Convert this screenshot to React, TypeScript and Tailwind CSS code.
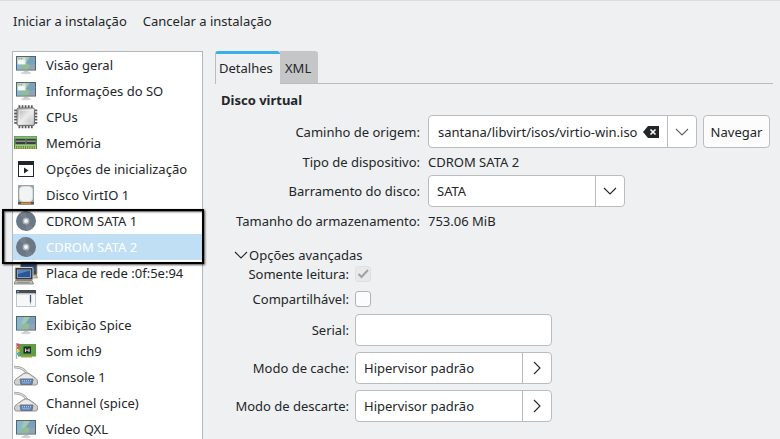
import type { ReactNode } from "react";

function Monitor({ windowed = false }: { windowed?: boolean }) {
  return (
    <svg viewBox="0 0 24 24" className="size-6">
      <ellipse cx="12" cy="20" rx="5" ry="1.2" fill="#d3d5d6" />
      <path d="M10 17h4l.5 2.6h-5z" fill="#c9cbcc" />
      <rect x="2" y="3" width="20" height="15" fill="#5b6369" />
      <rect x="3" y="4" width="18" height="12.5" fill="#83aeb4" />
      <path d="M3 4h7l-3 12.500H3z" fill="#86b9cf" />
      <path d="M10 4h6l-4 6-5 2z" fill="#a3c8ae" />
      <path d="M16 4h5v7l-5 1-4-2z" fill="#7ba2bd" />
      <path d="M12 10l4 2-2 4.500H7l0-4.500z" fill="#93bb99" />
      <path d="M21 11v5.500h-7l2-4.500z" fill="#94a3b4" />
      <rect x="2" y="17" width="20" height="1" fill="#a5a9ab" />
      {windowed && (
        <>
          <rect x="3.500" y="4.500" width="8" height="7" fill="#dfeef0" />
          <rect x="4" y="5" width="1.800" height="1.500" fill="#e59a5a" />
          <rect x="6.500" y="5" width="1.800" height="1.500" fill="#6cb86a" />
          <rect x="9" y="5" width="1.800" height="1.500" fill="#e8d48c" />
          <rect x="4.500" y="7.500" width="6" height="3.500" fill="#f5fafa" />
        </>
      )}
    </svg>
  );
}

function Cpu() {
  return (
    <svg viewBox="0 0 24 24" className="size-6">
      <defs>
        <linearGradient id="cpu" x1="0" y1="0" x2="1" y2="1">
          <stop offset="0" stopColor="#a9a9a9" />
          <stop offset=".5" stopColor="#ececec" />
          <stop offset="1" stopColor="#b5b5b5" />
        </linearGradient>
      </defs>
      <path
        d="M4.500 1.700h15M4.500 21.800h15M1.700 4.500v15M21.800 4.500v15"
        stroke="#5a5a5a"
        strokeWidth="3"
        strokeDasharray="1.800 1.300"
      />
      <rect x="3" y="3" width="17.500" height="17.500" rx="1.500" fill="url(#cpu)" stroke="#6f6f6f" />
      <rect x="5.500" y="5.500" width="12.500" height="12.500" fill="none" stroke="#f4f4f4" strokeOpacity=".6" />
    </svg>
  );
}

function Memory() {
  return (
    <svg viewBox="0 0 24 24" className="size-6">
      <rect x="0" y="5" width="23" height="13" fill="#4e8a45" />
      <rect x="0.500" y="5.500" width="22" height="2" fill="#8cba7c" />
      <rect x="2" y="8" width="9" height="5" fill="#3a3f3b" />
      <rect x="12.500" y="8" width="9" height="5" fill="#3a3f3b" />
      <rect x="2" y="9.500" width="9" height="1.500" fill="#8d938e" />
      <rect x="12.500" y="9.500" width="9" height="1.500" fill="#8d938e" />
      <rect x="1" y="13.500" width="21" height="1.500" fill="#9fc78d" />
      <path d="M1 16.500h21" stroke="#d8c568" strokeWidth="2.500" strokeDasharray="1.200 1" />
    </svg>
  );
}

function Boot() {
  return (
    <svg viewBox="0 0 24 24" className="size-6">
      <rect x="4.500" y="4.500" width="15" height="15" fill="#fff" stroke="#232629" />
      <rect x="4" y="4" width="16" height="4" fill="#232629" />
      <path d="M10 10.500v6l4.500-3z" fill="#232629" />
    </svg>
  );
}

function Disk() {
  return (
    <svg viewBox="0 0 24 24" className="size-6">
      <rect x="4" y="2" width="16" height="19.500" rx="1" fill="#9aa0a3" />
      <rect x="5.500" y="3.500" width="13" height="15" rx="3.500" fill="#f2f3f3" stroke="#d9dcdd" />
      <rect x="4" y="19" width="16" height="2.500" fill="#54595c" />
      <rect x="7" y="19.500" width="10" height="1.500" fill="#d9902f" />
    </svg>
  );
}

function Disc() {
  return (
    <svg viewBox="0 0 24 24" className="size-6">
      <circle cx="12" cy="12" r="10" fill="#6a7784" />
      <path d="M12 12L5 5a10 10 0 0 1 7-3zM12 12l7 7a10 10 0 0 1-7 3z" fill="#75818d" />
      <circle cx="12" cy="12" r="3.500" fill="#aab1b7" />
      <circle cx="12" cy="12" r="2" fill="#f3f4f5" />
    </svg>
  );
}

function Network() {
  return (
    <svg viewBox="0 0 24 24" className="size-6">
      <rect x="6.500" y="1" width="16.500" height="13" rx="1" fill="#4a4b47" stroke="#a9a89e" strokeWidth=".8" />
      <rect x="8.500" y="3" width="12.500" height="9" fill="#2a4f86" />
      <path d="M18 14h4.500l1 3H18z" fill="#c6c4b8" stroke="#77766d" strokeWidth=".6" />
      <rect x="1" y="6.500" width="18" height="12.500" rx="1" fill="#3a3b38" stroke="#d2d1c6" />
      <rect x="3.500" y="9" width="13" height="7.500" fill="#2a5599" stroke="#9db6da" strokeWidth=".8" />
      <path d="M4 9.500h12L4 13z" fill="#5d86c0" />
      <path d="M1.500 19.500h16.500l1.500 3.500H0z" fill="#c3c2b6" stroke="#66675f" strokeWidth=".7" />
      <path d="M3 21.300h13" stroke="#85867d" />
    </svg>
  );
}

function TabletIcon() {
  return (
    <svg viewBox="0 0 24 24" className="size-6">
      <rect x="2.500" y="3.500" width="19" height="16" fill="#f6f7f7" stroke="#c3c6c8" />
      <rect x="2" y="3" width="20" height="3.500" fill="#454c52" />
      <rect x="3" y="4" width="2" height="1.200" fill="#5ba4d8" />
      <rect x="3" y="6.500" width="18" height="1.500" fill="#dcdfe1" />
      <path d="M16.500 8v7.500" stroke="#3f5a80" strokeWidth="1.300" />
      <path d="M16.500 15.500v2" stroke="#a6adb5" />
    </svg>
  );
}

function SoundCard() {
  return (
    <svg viewBox="0 0 24 24" className="size-6">
      <path d="M2.500 4v16" stroke="#aeb2b4" strokeWidth="1.300" />
      <rect x="4" y="5" width="18" height="12.500" fill="#5d9f42" />
      <rect x="7" y="16.500" width="11" height="2" fill="#8fa84b" />
      <rect x="3" y="4.500" width="2.500" height="2.500" fill="#df3f87" />
      <rect x="3" y="7.500" width="2.500" height="2.500" fill="#e35b3b" />
      <rect x="3" y="10.500" width="2.500" height="2.500" fill="#f0d33c" />
      <rect x="3" y="13.500" width="2.500" height="2.500" fill="#46b8c8" />
      <rect x="9.500" y="7.500" width="7.500" height="7" fill="#272b2d" />
      <path d="M11.500 9.500v3.500M11.500 11.200h4M15 9.500v3.500" stroke="#cfd3d4" />
    </svg>
  );
}

function SerialPort() {
  return (
    <svg viewBox="0 0 24 24" className="size-6">
      <path d="M0 2c6 0 11 2 13 7" fill="none" stroke="#9d9d9d" strokeWidth="2.600" />
      <path d="M0 2c6 0 11 2 13 7" fill="none" stroke="#dcdcdc" strokeWidth="1.200" />
      <path
        d="M9.500 8.500q2.500-1.500 5.500 0l7 5q1.500 1.200 1.500 3v1.500q0 2-2 2h-19q-2 0-2-2v-1.500q0-1.500 1.500-2.500z"
        fill="#cfcfcf"
        stroke="#8f8f8f"
      />
      <path d="M10 9.500q2-1 4.500 0l6 4.500H3z" fill="#ececec" />
      <path d="M6 14h13l-1 5.500H7z" fill="#5c82bb" stroke="#6e747b" />
      <path d="M8 15.800h9M8.500 17.800h8" stroke="#d3e0f3" strokeDasharray="1 1" />
    </svg>
  );
}

const devices: { name: string; icon: ReactNode; selected?: boolean }[] = [
  { name: "Visão geral", icon: <Monitor windowed /> },
  { name: "Informações do SO", icon: <Monitor windowed /> },
  { name: "CPUs", icon: <Cpu /> },
  { name: "Memória", icon: <Memory /> },
  { name: "Opções de inicialização", icon: <Boot /> },
  { name: "Disco VirtIO 1", icon: <Disk /> },
  { name: "CDROM SATA 1", icon: <Disc /> },
  { name: "CDROM SATA 2", icon: <Disc />, selected: true },
  { name: "Placa de rede :0f:5e:94", icon: <Network /> },
  { name: "Tablet", icon: <TabletIcon /> },
  { name: "Exibição Spice", icon: <Monitor /> },
  { name: "Som ich9", icon: <SoundCard /> },
  { name: "Console 1", icon: <SerialPort /> },
  { name: "Channel (spice)", icon: <SerialPort /> },
  { name: "Vídeo QXL", icon: <Monitor /> },
];

function Chevron({ dir }: { dir: "down" | "right" }) {
  return (
    <svg viewBox="0 0 14 14" className="size-3.5" fill="none" stroke="currentColor" strokeWidth="1.1">
      <path d={dir === "down" ? "M1 4l6 6 6-6" : "M4 1l6 6-6 6"} />
    </svg>
  );
}

function Select({ id, value, dir }: { id: string; value: string; dir: "down" | "right" }) {
  return (
    <div className="relative w-[197px]">
      <select id={id} className="block h-8 w-full appearance-none rounded border border-[#bbbcbe] bg-white pr-8 pl-2">
        <option>{value}</option>
      </select>
      <span className="pointer-events-none absolute inset-y-px right-px flex w-[29px] items-center justify-center border-l border-[#bbbcbe]">
        <Chevron dir={dir} />
      </span>
    </div>
  );
}

export default function App() {
  return (
    <div className="flex h-screen flex-col overflow-hidden border-t border-[#dcdddf] bg-[#eff0f1] font-['Noto_Sans',sans-serif] text-[13px] leading-[18px] text-[#232629]">
      <header className="flex gap-4 px-[13px] pt-[11px]">
        <button type="button">Iniciar a instalação</button>
        <button type="button">Cancelar a instalação</button>
      </header>

      <div className="flex min-h-0 flex-1 gap-3 pt-[21px] pr-[7px] pl-3">
        <nav className="relative w-[191px] shrink-0">
          <ul className="h-full overflow-hidden border border-b-0 border-[#b6b7b9] bg-white">
            {devices.map((d) => (
              <li key={d.name}>
                <button
                  type="button"
                  className={`flex h-[26px] w-full items-center gap-2 pl-px text-left whitespace-nowrap ${d.selected ? "bg-[#c0dff5] text-white" : ""}`}
                >
                  {d.icon}
                  {d.name}
                </button>
              </li>
            ))}
          </ul>
          <div className="pointer-events-none absolute top-[158px] -right-px -left-2.5 h-[55px] border-2 border-black shadow-[1px_1px_2px_rgba(0,0,0,0.7),inset_1px_1px_2px_rgba(0,0,0,0.7)]" />
        </nav>

        <main className="min-w-0 flex-1">
          <div role="tablist" className="flex h-[33px]">
            <button
              type="button"
              role="tab"
              aria-selected="true"
              className="w-[65px] rounded-t-[3px] border-t-3 border-l border-t-[#3daee9] border-l-[#bbbcbe] pb-0.5 pl-[3px] text-left"
            >
              Detalhes
            </button>
            <div className="flex flex-1 border-b border-[#bbbcbe]">
              <button type="button" role="tab" aria-selected="false" className="rounded-tr-[3px] bg-[#c5c6c8] pt-0.5 pr-[7px] pl-[5px]">
                XML
              </button>
            </div>
          </div>

          <section className="pt-[7px] pr-[3px] pl-1.5">
            <h2 className="font-bold">Disco virtual</h2>
            <div className="grid grid-cols-[199px_1fr] items-center gap-x-2 pt-1.5">
              <label htmlFor="path" className="text-right">Caminho de origem:</label>
              <div className="flex gap-1.5">
                <div className="flex h-[33px] min-w-0 flex-1 items-center rounded border border-[#bbbcbe] bg-white">
                  <input id="path" defaultValue="santana/libvirt/isos/virtio-win.iso" className="h-full min-w-0 flex-1 pl-[9px] outline-none" />
                  <button type="button" aria-label="Limpar" className="pr-2 pl-1">
                    <svg viewBox="0 0 16 12" className="h-3 w-4">
                      <path d="M0 6l5-6h11v12H5z" fill="#232629" />
                      <path d="M7.500 3.500l5 5m0-5l-5 5" stroke="#fff" strokeWidth="1.600" />
                    </svg>
                  </button>
                  <button type="button" aria-label="Abrir lista" className="flex h-full w-[29px] items-center justify-center border-l border-[#bbbcbe] text-[#5f6265]">
                    <Chevron dir="down" />
                  </button>
                </div>
                <button type="button" className="min-w-[67px] rounded border border-[#bbbcbe] bg-[#fcfcfc]">Navegar</button>
              </div>

              <span className="pt-[5px] pb-1 text-right">Tipo de dispositivo:</span>
              <span className="pt-[5px] pb-1">CDROM SATA 2</span>

              <label htmlFor="bus" className="text-right">Barramento do disco:</label>
              <Select id="bus" value="SATA" dir="down" />

              <span className="pt-[5px] pb-1 text-right">Tamanho do armazenamento:</span>
              <span className="pt-[5px] pb-1">753.06 MiB</span>
            </div>

            <button type="button" aria-expanded="true" className="mt-3 ml-[13px] flex items-center gap-px">
              <Chevron dir="down" />
              Opções avançadas
            </button>

            <div className="grid grid-cols-[128px_1fr] items-center gap-1.5">
              <label htmlFor="ro" className="py-px text-right">Somente leitura:</label>
              <span className="grid size-4 place-items-center">
                <input id="ro" type="checkbox" defaultChecked disabled className="col-start-1 row-start-1 size-4 appearance-none rounded-[3px] border border-[#dfe0e1] bg-[#e8e9ea]" />
                <svg viewBox="0 0 16 16" className="pointer-events-none col-start-1 row-start-1 size-4" fill="none" stroke="#a0a2a4" strokeWidth="2">
                  <path d="M3.500 8l3 3 6.500-7" />
                </svg>
              </span>
              <label htmlFor="share" className="text-right">Compartilhável:</label>
              <input id="share" type="checkbox" className="size-4 appearance-none rounded-[3px] border border-[#b3b4b6] bg-[#fcfcfc]" />
              <label htmlFor="serial" className="text-right">Serial:</label>
              <input id="serial" className="h-8 w-[197px] rounded border border-[#bbbcbe] bg-white px-2" />
              <label htmlFor="cache" className="text-right">Modo de cache:</label>
              <Select id="cache" value="Hipervisor padrão" dir="right" />
              <label htmlFor="discard" className="text-right">Modo de descarte:</label>
              <Select id="discard" value="Hipervisor padrão" dir="right" />
            </div>
          </section>
        </main>
      </div>
    </div>
  );
}
